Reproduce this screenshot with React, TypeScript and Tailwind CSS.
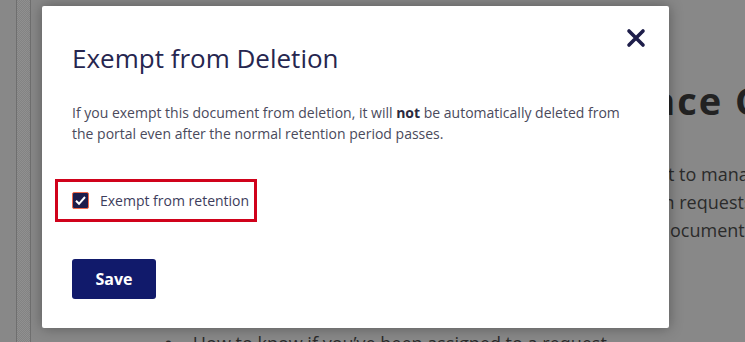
import { useState } from 'react'

const font = { fontFamily: '"Open Sans", "Noto Sans", sans-serif' }

function CloseIcon() {
  return (
    <svg width="20" height="20" viewBox="0 0 20 20" aria-hidden="true">
      <path d="M3 3 L17 17 M17 3 L3 17" stroke="#1e1e4a" strokeWidth="3.6" strokeLinecap="round" fill="none" />
    </svg>
  )
}

export default function App() {
  const [exempt, setExempt] = useState(true)

  return (
    <div className="relative w-[745px] h-[342px] overflow-hidden bg-[#888888]" style={font}>
      {/* page behind the dim overlay */}
      <div className="flex h-full">
        <div className="flex w-[31px] shrink-0 pl-4">
          <div className="w-[15px] border-x border-[#6f6f6f] bg-[repeating-conic-gradient(#909090_0_25%,#838383_0_50%)] bg-[length:2px_2px]" />
        </div>
        <div className="flex-1 pt-[78px] text-[#262626]">
          <h1 className="whitespace-nowrap pl-[450px] text-[38px] font-bold leading-[44px] tracking-[2px] text-[#222]">
            Compliance Center
          </h1>
          <div className="mt-[38px] whitespace-nowrap text-[18px] leading-[28px] text-[#2b2b2b]">
            <p className="pl-[637px]">t to manage</p>
            <p className="pl-[628px]">in requests</p>
            <p className="pl-[628px]">document</p>
          </div>
          <div className="mt-[85px] flex items-baseline gap-[21px] whitespace-nowrap pl-[134px] text-[18px] leading-[28px] text-[#2b2b2b]">
            <span className="font-bold">•</span>
            <span>How to know if you’ve been assigned to a request</span>
          </div>
        </div>
      </div>

      {/* modal */}
      <div className="absolute left-[42px] top-[6px] w-[627px] h-[322px] rounded-[2px] bg-white shadow-[0_0_14px_rgba(0,0,0,0.35)]">
        <div className="flex items-start justify-between pl-[30px] pr-[21px] pt-[34px]">
          <h2 className="text-[26px] font-normal leading-[36px] text-[#26264f]">Exempt from Deletion</h2>
          <button className="-mt-[14px] flex h-[24px] w-[24px] items-center justify-center" aria-label="Close">
            <CloseIcon />
          </button>
        </div>
        <p className="mt-[26px] w-[592px] pl-[30px] text-[14px] leading-[21px] text-[#4a4a5c]">
          If you exempt this document from deletion, it will <strong className="font-bold text-[#2a2a3e]">not</strong> be
          automatically deleted from the portal even after the normal retention period passes.
        </p>
        <div className="ml-[13px] mt-[35px] inline-flex items-center gap-[11px] border-[3px] border-[#d0021b] py-[9px] pl-[14px] pr-[5px]">
          <button
            onClick={() => setExempt(!exempt)}
            className="flex h-[17px] w-[17px] items-center justify-center rounded-[2px] border border-[#f06a4a] bg-[#1d1d4b]"
            aria-label="Exempt from retention"
          >
            {exempt && (
              <svg width="13" height="13" viewBox="0 0 13 13" aria-hidden="true">
                <path d="M2 6.8 L5 9.8 L11 3" stroke="white" strokeWidth="2" fill="none" />
              </svg>
            )}
          </button>
          <span className="text-[14px] leading-[19px] text-[#3d3d5c]">Exempt from retention</span>
        </div>
        <div className="pl-[30px] pt-[37px]">
          <button className="h-[40px] w-[84px] rounded-[3px] bg-[#111a6b] text-[16px] font-bold text-white">Save</button>
        </div>
      </div>
    </div>
  )
}
